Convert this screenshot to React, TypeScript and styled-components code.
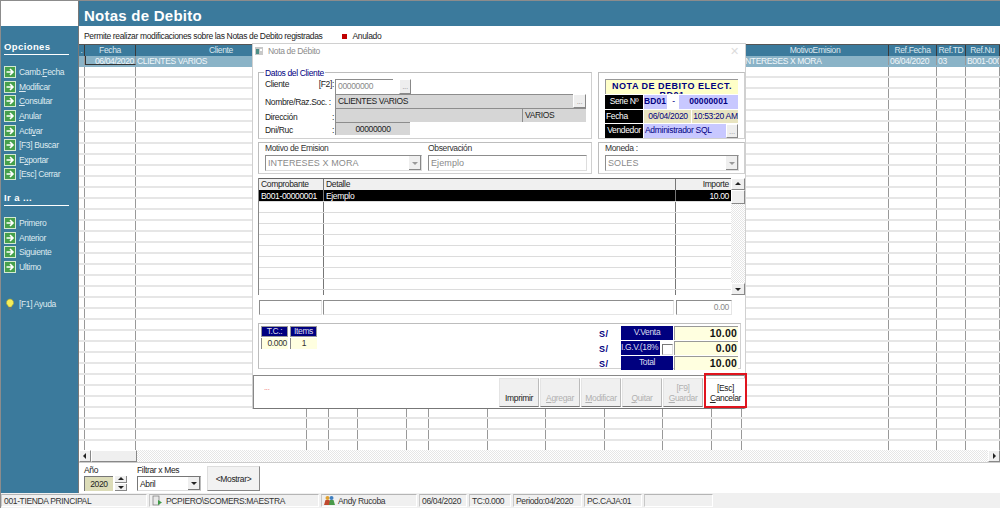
import React from "react";
import styled, { createGlobalStyle } from "styled-components";

const Global = createGlobalStyle`
  html, body { margin: 0; padding: 0; background: #fff; }
  body { font-family: "Liberation Sans", Arial, sans-serif; font-size: 8.5px; letter-spacing: -0.35px; color: #222; overflow: hidden; }
  * { box-sizing: border-box; }
`;

const TEAL = "#3b7a9c";
const NAVY = "#00007f";
const COLS = [6, 51, 171, 22, 29, 49, 22, 59, 58, 59, 58, 49, 30, 147, 48, 29, 34];
const TEMPLATE = COLS.map((c) => `${c}px`).join(" ");

const Page = styled.div`
  position: relative;
  width: 1000px;
  height: 508px;
  display: flex;
  flex-direction: column;
  border-top: 1px solid #8c8c8c;
  border-left: 1px solid #8c8c8c;
  overflow: hidden;
`;
const Main = styled.div`
  flex: 1;
  display: flex;
  min-height: 0;
`;
const Sidebar = styled.aside`
  width: 78px;
  flex: none;
  background: ${TEAL};
  display: flex;
  flex-direction: column;
  border-right: 1px solid #777;
`;
const Logo = styled.div`
  height: 25px;
  background: #fff;
  flex: none;
`;
const SideHead = styled.div<{ $mt?: number }>`
  margin: ${(p) => p.$mt ?? 15}px 9px 0 3px;
  padding-bottom: 2px;
  border-bottom: 1px solid #fff;
  color: #fff;
  font-weight: bold;
  font-size: 9.5px;
  letter-spacing: 0.4px;
  line-height: 11px;
  height: 14px;
`;
const SideList = styled.div<{ $mt?: number }>`
  margin-top: ${(p) => p.$mt ?? 10}px;
  display: flex;
  flex-direction: column;
`;
const SideItem = styled.div`
  height: 14.6px;
  display: flex;
  align-items: center;
  gap: 3px;
  padding-left: 3px;
  color: #dfeaf0;
  font-size: 8.5px;
  white-space: nowrap;
`;
const Content = styled.div`
  flex: 1;
  display: flex;
  flex-direction: column;
  min-width: 0;
`;
const Banner = styled.div`
  height: 25px;
  flex: none;
  background: ${TEAL};
  color: #fff;
  font-weight: bold;
  font-size: 15px;
  line-height: 29px;
  padding-left: 5px;
  letter-spacing: 0.25px;
`;
const Hint = styled.div`
  height: 18px;
  flex: none;
  display: flex;
  align-items: center;
  padding: 2px 0 0 5px;
  font-size: 8.5px;
  color: #222;
  white-space: nowrap;
`;
const RedDot = styled.span`
  width: 5px;
  height: 5px;
  background: #c00000;
  margin: 0 6px 0 19px;
`;
const Grid = styled.div`
  flex: 1;
  min-height: 0;
  overflow: hidden;
`;
const GridHead = styled.div`
  display: grid;
  grid-template-columns: ${TEMPLATE};
  height: 12px;
  background: ${TEAL};
  border-top: 1px solid #555;
  color: #dbe7ee;
  font-size: 8.5px;
  line-height: 11px;
`;
const HeadCell = styled.div`
  text-align: center;
  border-right: 1px solid #3a3a3a;
  overflow: hidden;
  white-space: nowrap;
`;
const GridRow = styled.div<{ $sel?: boolean }>`
  display: grid;
  grid-template-columns: ${TEMPLATE};
  height: 11px;
  background: ${(p) => (p.$sel ? "#8ab3c7" : "#fff")};
  border-bottom: 2px solid ${(p) => (p.$sel ? "#8ab3c7" : "#e6e6e6")};
  color: #f2f7fa;
  font-size: 8.5px;
  line-height: 10px;
`;
const Cell = styled.div<{ $right?: boolean; $focus?: boolean }>`
  border-right: 1px solid #999;
  overflow: hidden;
  white-space: nowrap;
  padding: 0 1px;
  text-align: ${(p) => (p.$right ? "right" : "left")};
  ${(p) => p.$focus && "border-bottom: 1px solid #333; border-left: 1px solid #333;"}
`;
const HScroll = styled.div`
  height: 13px;
  flex: none;
  display: flex;
  background: repeating-conic-gradient(#e6e6e6 0 25%, #fff 0 50%) 0 0 / 2px 2px;
  border-bottom: 1px solid #ccc;
`;
const ScrollBtn = styled.div<{ $w?: number; $h?: number }>`
  width: ${(p) => p.$w ?? 12}px;
  height: ${(p) => p.$h ?? 12}px;
  flex: none;
  display: flex;
  align-items: center;
  justify-content: center;
  background: #efefef;
  border-right: 1px solid #888;
  border-bottom: 1px solid #888;
  border-top: 1px solid #fff;
  border-left: 1px solid #fff;
`;
const HSpacer = styled.div`
  flex: 1;
`;
const Filter = styled.div`
  height: 30px;
  flex: none;
  display: flex;
  align-items: flex-end;
  padding: 0 0 2px 5px;
  background: #fff;
`;
const Stack = styled.div<{ $ml?: number }>`
  display: flex;
  flex-direction: column;
  margin-left: ${(p) => p.$ml ?? 0}px;
`;
const SmallLabel = styled.div`
  font-size: 8.5px;
  line-height: 11px;
  color: #222;
`;
const InsetRow = styled.div`
  display: flex;
  align-items: center;
  gap: 2px;
`;
const YearBox = styled.div`
  width: 29px;
  height: 15px;
  background: #dcdcb8;
  border-top: 1px solid #777;
  border-left: 1px solid #777;
  text-align: center;
  line-height: 14px;
  font-size: 8.5px;
`;
const Spin = styled.div`
  width: 12px;
  height: 15px;
  display: flex;
  flex-direction: column;
  gap: 1px;
`;
const SpinPart = styled.div`
  flex: 1;
  background: #f0f0f0;
  border-right: 1px solid #888;
  border-bottom: 1px solid #888;
  display: flex;
  align-items: center;
  justify-content: center;
`;
const MonthSelect = styled.div`
  width: 64px;
  height: 15px;
  border-top: 1px solid #777;
  border-left: 1px solid #777;
  border-right: 1px solid #bbb;
  border-bottom: 1px solid #ddd;
  display: flex;
  align-items: center;
  justify-content: space-between;
  padding-left: 2px;
  font-size: 8.5px;
`;
const MiniDrop = styled.div`
  width: 12px;
  height: 13px;
  background: #efefef;
  border-right: 1px solid #777;
  border-bottom: 1px solid #777;
  display: flex;
  align-items: center;
  justify-content: center;
`;
const ShowBtn = styled.div`
  width: 53px;
  height: 25px;
  margin-left: 6px;
  background: #f2f2f2;
  border-right: 1px solid #888;
  border-bottom: 1px solid #888;
  border-top: 1px solid #ddd;
  border-left: 1px solid #ddd;
  display: flex;
  align-items: center;
  justify-content: center;
  font-size: 8.5px;
`;
const Status = styled.footer`
  height: 15px;
  flex: none;
  display: flex;
  gap: 2px;
  background: #f0f0f0;
  padding-top: 1px;
`;
const Pane = styled.div<{ $w: number }>`
  width: ${(p) => p.$w}px;
  height: 13px;
  flex: none;
  display: flex;
  align-items: center;
  gap: 3px;
  padding-left: 2px;
  font-size: 8.5px;
  color: #333;
  white-space: nowrap;
  overflow: hidden;
  border-top: 1px solid #b5b5b5;
  border-left: 1px solid #c8c8c8;
  border-bottom: 1px solid #fff;
  border-right: 1px solid #fff;
`;

/* ---------- dialog ---------- */
const Dialog = styled.section`
  position: absolute;
  left: 251px;
  top: 42px;
  width: 494px;
  height: 366px;
  background: #fff;
  border: 1px solid #d0d0d0;
  border-bottom: none;
  display: flex;
  flex-direction: column;
`;
const TitleBar = styled.div`
  height: 17px;
  flex: none;
  display: flex;
  align-items: center;
  gap: 5px;
  padding: 0 5px 3px 2px;
  color: #8b8b8b;
  font-size: 8.5px;
`;
const TitleX = styled.span`
  margin-left: auto;
  color: #dcdcdc;
  font-size: 11px;
  margin-right: 1px;
`;
const Body = styled.div`
  flex: 1;
  padding: 11px 0 0 5px;
  display: flex;
  flex-direction: column;
`;
const TwoUp = styled.div<{ $mt?: number }>`
  display: flex;
  gap: 6px;
  margin-top: ${(p) => p.$mt ?? 0}px;
`;
const Group = styled.div<{ $w: number; $h: number }>`
  position: relative;
  width: ${(p) => p.$w}px;
  height: ${(p) => p.$h}px;
  flex: none;
  border: 1px solid #bdbdbd;
  border-right-color: #d0d0d0;
  border-bottom-color: #d0d0d0;
`;
const Legend = styled.span`
  position: absolute;
  left: 5px;
  top: -5px;
  background: #fff;
  padding: 0 1px;
  color: ${NAVY};
  font-size: 8.5px;
  line-height: 10px;
`;
const Datos = styled(Group)`
  padding: 6px 5px 0 6px;
  display: flex;
  flex-direction: column;
`;
const FormRow = styled.div<{ $h: number }>`
  height: ${(p) => p.$h}px;
  display: flex;
  align-items: center;
`;
const FormLabel = styled.div<{ $top?: number; $bottom?: number }>`
  width: 70px;
  flex: none;
  display: flex;
  justify-content: space-between;
  padding: ${(p) => p.$top ?? 0}px 1px ${(p) => p.$bottom ?? 0}px 0;
  font-size: 8.5px;
  white-space: nowrap;
  color: #222;
`;
const Field = styled.div<{ $w?: number; $bg?: string; $center?: boolean; $muted?: boolean }>`
  width: ${(p) => (p.$w ? `${p.$w}px` : "auto")};
  flex: ${(p) => (p.$w ? "none" : "1")};
  height: 100%;
  background: ${(p) => p.$bg ?? "#fff"};
  border-top: 1px solid #8d8d8d;
  border-left: 1px solid #8d8d8d;
  font-size: 8.5px;
  line-height: 12px;
  padding: 0 2px;
  text-align: ${(p) => (p.$center ? "center" : "left")};
  color: ${(p) => (p.$muted ? "#8a8a8a" : "#222")};
  white-space: nowrap;
  overflow: hidden;
`;
const Dots = styled.div<{ $w?: number; $ml?: number }>`
  width: ${(p) => p.$w ?? 13}px;
  margin-left: ${(p) => p.$ml ?? 0}px;
  height: 100%;
  flex: none;
  background: #eee;
  border-right: 1px solid #888;
  border-bottom: 1px solid #888;
  border-top: 1px solid #fff;
  border-left: 1px solid #fff;
  color: #999;
  font-size: 8px;
  line-height: 13px;
  text-align: center;
`;
const Split = styled(Group)`
  padding: 0 5px 0 6px;
  display: flex;
  gap: 6px;
`;
const Col = styled.div<{ $w: number }>`
  width: ${(p) => p.$w}px;
  flex: none;
  display: flex;
  flex-direction: column;
`;
const ColLabel = styled.div`
  height: 12px;
  line-height: 11px;
  font-size: 8.5px;
  color: #333;
`;
const Combo = styled.div`
  height: 16px;
  display: flex;
  justify-content: space-between;
  border-top: 1px solid #8d8d8d;
  border-left: 1px solid #8d8d8d;
  border-right: 1px solid #ddd;
  border-bottom: 1px solid #ddd;
  color: #8a8a8a;
  font-size: 9px;
  line-height: 14px;
  padding-left: 2px;
  letter-spacing: 0.1px;
`;
const ComboBtn = styled.div`
  width: 12px;
  background: #efefef;
  border-right: 1px solid #888;
  border-bottom: 1px solid #888;
  display: flex;
  align-items: center;
  justify-content: center;
`;
const Serie = styled(Group)`
  padding: 6px 6px 0 6px;
  display: flex;
  flex-direction: column;
  gap: 1px;
`;
const DocTitle = styled.div`
  height: 15px;
  background: #ffffc8;
  border-top: 1px solid #999;
  border-left: 1px solid #999;
  color: ${NAVY};
  font-weight: bold;
  font-size: 9px;
  line-height: 9px;
  padding-top: 2px;
  letter-spacing: 0.5px;
  text-align: center;
  overflow: hidden;
`;
const SerieRow = styled.div<{ $h: number }>`
  height: ${(p) => p.$h}px;
  display: flex;
  gap: 1px;
`;
const BlackTag = styled.div<{ $left?: boolean }>`
  width: 38px;
  flex: none;
  background: #000;
  color: #fff;
  font-size: 8.5px;
  line-height: 13px;
  text-align: ${(p) => (p.$left ? "left" : "center")};
  padding-left: ${(p) => (p.$left ? 1 : 0)}px;
  overflow: hidden;
  white-space: nowrap;
`;
const Value = styled.div<{ $w?: number; $bg: string; $bold?: boolean; $center?: boolean }>`
  width: ${(p) => (p.$w ? `${p.$w}px` : "auto")};
  flex: ${(p) => (p.$w ? "none" : "1")};
  display: flex;
  justify-content: ${(p) => (p.$center ? "center" : "space-between")};
  background: ${(p) => p.$bg};
  color: ${NAVY};
  font-size: 8.5px;
  font-weight: ${(p) => (p.$bold ? "bold" : "normal")};
  letter-spacing: ${(p) => (p.$bold ? "0.1px" : "-0.3px")};
  line-height: 13px;
  padding-left: ${(p) => (p.$bold ? 0 : 1)}px;
  white-space: nowrap;
  overflow: hidden;
`;
const Detail = styled.div`
  margin-top: 4px;
  width: 487px;
  height: 117px;
  display: flex;
`;
const DetailTable = styled.div`
  flex: 1;
  display: flex;
  flex-direction: column;
  border-left: 1px solid #888;
  overflow: hidden;
`;
const DetailHead = styled.div`
  height: 12px;
  flex: none;
  display: grid;
  grid-template-columns: 65px 352px 56px;
  background: #f0f0f0;
  border-top: 1px solid #666;
  font-size: 8.5px;
  line-height: 11px;
`;
const DetailRow = styled.div<{ $sel?: boolean; $h?: number }>`
  height: ${(p) => p.$h ?? 11}px;
  flex: none;
  display: grid;
  grid-template-columns: 65px 352px 56px;
  background: ${(p) => (p.$sel ? "#000" : "#fff")};
  color: ${(p) => (p.$sel ? "#fff" : "#222")};
  border-bottom: 1px solid #dcdcdc;
  font-size: 8.5px;
  line-height: 12px;
`;
const DCell = styled.div<{ $right?: boolean }>`
  padding: 0 2px;
  border-right: 1px solid #777;
  text-align: ${(p) => (p.$right ? "right" : "left")};
  white-space: nowrap;
  overflow: hidden;
`;
const VScroll = styled.div`
  width: 14px;
  flex: none;
  display: flex;
  flex-direction: column;
  background: repeating-conic-gradient(#e6e6e6 0 25%, #fff 0 50%) 0 0 / 2px 2px;
`;
const SumRow = styled.div`
  margin-top: 5px;
  height: 15px;
  display: flex;
  gap: 1px;
  padding-left: 1px;
`;
const SumBox = styled.div<{ $w: number; $ml?: number }>`
  width: ${(p) => p.$w}px;
  margin-left: ${(p) => p.$ml ?? 0}px;
  border-top: 1px solid #8d8d8d;
  border-left: 1px solid #8d8d8d;
  border-bottom: 1px solid #e5e5e5;
  border-right: 1px solid #e5e5e5;
  color: #8a8a8a;
  text-align: right;
  font-size: 8.5px;
  line-height: 13px;
  padding-right: 2px;
`;
const Totals = styled(Group)`
  margin-top: 8px;
  padding: 2px 2px 0 2px;
  display: flex;
  justify-content: space-between;
`;
const MiniGrid = styled.div`
  display: grid;
  grid-template-columns: 27px 27px;
  grid-auto-rows: 11px;
  gap: 1px 2px;
`;
const NavyTag = styled.div`
  background: ${NAVY};
  border: 1px solid #999;
  color: #dde;
  font-size: 8.5px;
  line-height: 9px;
  text-align: center;
  white-space: nowrap;
  overflow: hidden;
`;
const CreamCell = styled.div<{ $right?: boolean }>`
  background: #ffffe0;
  border-left: 1px solid #888;
  font-size: 8.5px;
  line-height: 11px;
  text-align: ${(p) => (p.$right ? "right" : "center")};
  padding: 0 1px;
  color: #333;
`;
const Money = styled.div`
  display: grid;
  grid-template-columns: 21px 52px 64px;
  grid-auto-rows: 14px;
  gap: 1px;
  align-items: stretch;
`;
const Currency = styled.div`
  color: ${NAVY};
  font-weight: bold;
  font-size: 9px;
  line-height: 16px;
  letter-spacing: 0.5px;
`;
const AmountTag = styled.div`
  position: relative;
  background: ${NAVY};
  color: #dde;
  font-size: 8.5px;
  line-height: 12px;
  text-align: center;
  white-space: nowrap;
  overflow: hidden;
`;
const ChopTag = styled(AmountTag)`
  text-align: left;
`;
const Check = styled.span`
  position: absolute;
  right: 0;
  top: 0;
  width: 13px;
  height: 14px;
  background: #fff;
  border: 2px solid #fff;
  border-top: 3px solid #fff;
  &::before {
    content: "";
    display: block;
    width: 9px;
    height: 9px;
    border-top: 1px solid #777;
    border-left: 1px solid #777;
    border-right: 1px solid #ddd;
    border-bottom: 1px solid #ddd;
  }
`;
const Amount = styled.div`
  background: #ffffe0;
  border-top: 1px solid #999;
  border-left: 1px solid #999;
  color: #111;
  font-weight: bold;
  font-size: 10.5px;
  line-height: 13px;
  text-align: right;
  padding-right: 1px;
  letter-spacing: 0.2px;
`;
const ActionBar = styled.div`
  height: 34px;
  flex: none;
  border-top: 1px solid #888;
  border-left: 1px solid #888;
  border-bottom: 1px solid #777;
  border-right: 1px solid #bbb;
  display: flex;
  align-items: flex-start;
  padding: 2px 0 0 10px;
  background: #fff;
`;
const Note = styled.span`
  color: #e66;
  font-size: 8px;
  line-height: 20px;
  margin-right: auto;
`;
const ActionBtn = styled.div<{ $off?: boolean; $w?: number; $danger?: boolean }>`
  position: relative;
  width: ${(p) => p.$w ?? 40}px;
  height: 29px;
  margin-right: ${(p) => (p.$danger ? -2 : 1)}px;
  margin-left: ${(p) => (p.$danger ? 1 : 0)}px;
  background: ${(p) => (p.$danger ? "#fff" : "#f0f0f0")};
  border-right: 1px solid #bbb;
  border-bottom: 1px solid #777;
  border-left: 1px solid #e4e4e4;
  border-top: 1px solid #e4e4e4;
  color: ${(p) => (p.$off ? "#b0b0b0" : "#222")};
  font-size: 8.5px;
  line-height: 10px;
  display: flex;
  flex-direction: column;
  align-items: center;
  justify-content: flex-end;
  padding-bottom: 3px;
`;
const RedFrame = styled.span`
  position: absolute;
  inset: -6px -2px -2px -2px;
  border: 2px solid #e0141e;
  pointer-events: none;
`;

const Arrow = () => (
  <svg width="12" height="12" viewBox="0 0 12 12" style={{ flex: "none" }}>
    <rect x="0.5" y="0.5" width="11" height="11" fill="#46a04c" stroke="#d4ead2" />
    <path d="M2.5 6h6M6 3l3 3-3 3" stroke="#fff" strokeWidth="1.6" fill="none" />
  </svg>
);
const Bulb = () => (
  <svg width="12" height="13" viewBox="0 0 12 13" style={{ flex: "none" }}>
    <path d="M6 1a3.6 3.6 0 0 0-2.2 6.4c.5.5.7 1 .7 1.6h3c0-.6.2-1.1.7-1.6A3.6 3.6 0 0 0 6 1z" fill="#f4ee5a" stroke="#b9a92e" strokeWidth=".6" />
    <rect x="4.6" y="9.2" width="2.8" height="2.6" fill="#6c7478" />
  </svg>
);
const Tri = ({ dir = "down", c = "#222" }: { dir?: "up" | "down" | "left" | "right"; c?: string }) => {
  const d = { up: "M0 4L3 1l3 3z", down: "M0 2h6L3 5z", left: "M4 0v6L1 3z", right: "M2 0v6l3-3z" }[dir];
  return (
    <svg width="6" height="6" viewBox="0 0 6 6">
      <path d={d} fill={c} />
    </svg>
  );
};
const WinIcon = () => (
  <svg width="8" height="8" viewBox="0 0 8 8" style={{ flex: "none" }}>
    <rect x="0" y="0" width="8" height="8" fill="#c9c9c9" />
    <rect x="1" y="2" width="3" height="5" fill="#4f8f86" />
    <rect x="5" y="2" width="2" height="2" fill="#fff" />
  </svg>
);
const DbIcon = () => (
  <svg width="11" height="11" viewBox="0 0 11 11" style={{ flex: "none" }}>
    <rect x="1" y="1" width="6" height="9" fill="#e8e8e8" stroke="#777" strokeWidth=".7" />
    <path d="M6 5l4 2.5L6 10z" fill="#3d9a45" />
  </svg>
);
const UsersIcon = () => (
  <svg width="11" height="11" viewBox="0 0 11 11" style={{ flex: "none" }}>
    <circle cx="3.5" cy="3" r="2" fill="#e0a030" />
    <circle cx="7.5" cy="3" r="2" fill="#3f7fc0" />
    <path d="M0 10l1.5-5h4L7 10z" fill="#c0492f" />
    <path d="M5 10l1-5h3.5l1.5 5z" fill="#4a9a4a" />
  </svg>
);

const opciones: React.ReactNode[] = [
  <span>Camb.<u>F</u>echa</span>,
  <span><u>M</u>odificar</span>,
  <span><u>C</u>onsultar</span>,
  <span><u>A</u>nular</span>,
  <span>Acti<u>v</u>ar</span>,
  <span>[F3] Buscar</span>,
  <span>E<u>x</u>portar</span>,
  <span>[Esc] Cerrar</span>,
];
const irA = ["Primero", "Anterior", "Siguiente", "Ultimo"];
const heads: Record<number, string> = { 0: ".", 1: "Fecha", 2: "Cliente", 13: "MotivoEmision", 14: "Ref.Fecha", 15: "Ref.TD", 16: "Ref.Nu" };
const selected: Record<number, string> = { 2: "CLIENTES VARIOS", 13: "INTERESES X MORA", 14: "06/04/2020", 15: "03", 16: "B001-00000001" };

export default function App() {
  return (
    <Page>
      <Global />
      <Main>
        <Sidebar>
          <Logo />
          <SideHead>Opciones</SideHead>
          <SideList>
            {opciones.map((o, i) => (
              <SideItem key={i}><Arrow />{o}</SideItem>
            ))}
          </SideList>
          <SideHead $mt={10}>Ir a ...</SideHead>
          <SideList>
            {irA.map((o) => (
              <SideItem key={o}><Arrow />{o}</SideItem>
            ))}
          </SideList>
          <SideList $mt={23}>
            <SideItem><Bulb />[F1] Ayuda</SideItem>
          </SideList>
        </Sidebar>
        <Content>
          <Banner>Notas de Debito</Banner>
          <Hint>
            Permite realizar modificaciones sobre las Notas de Debito registradas
            <RedDot />
            Anulado
          </Hint>
          <Grid>
            <GridHead>
              {COLS.map((_, i) => (
                <HeadCell key={i}>{heads[i] ?? ""}</HeadCell>
              ))}
            </GridHead>
            <GridRow $sel>
              {COLS.map((_, i) =>
                i === 1 ? (
                  <Cell key={i} $right $focus>06/04/2020</Cell>
                ) : (
                  <Cell key={i}>{selected[i] ?? ""}</Cell>
                )
              )}
            </GridRow>
            {Array.from({ length: 35 }).map((_, r) => (
              <GridRow key={r}>
                {COLS.map((_, i) => (
                  <Cell key={i} />
                ))}
              </GridRow>
            ))}
          </Grid>
          <HScroll>
            <ScrollBtn><Tri dir="left" /></ScrollBtn>
            <ScrollBtn $w={46} />
            <HSpacer />
            <ScrollBtn><Tri dir="right" /></ScrollBtn>
          </HScroll>
          <Filter>
            <Stack>
              <SmallLabel>Año</SmallLabel>
              <InsetRow>
                <YearBox>2020</YearBox>
                <Spin>
                  <SpinPart><Tri dir="up" /></SpinPart>
                  <SpinPart><Tri dir="down" /></SpinPart>
                </Spin>
              </InsetRow>
            </Stack>
            <Stack $ml={10}>
              <SmallLabel>Filtrar x Mes</SmallLabel>
              <MonthSelect>
                Abril
                <MiniDrop><Tri /></MiniDrop>
              </MonthSelect>
            </Stack>
            <ShowBtn>&lt;Mostrar&gt;</ShowBtn>
          </Filter>
        </Content>
      </Main>
      <Status>
        <Pane $w={146}>001-TIENDA PRINCIPAL</Pane>
        <Pane $w={170}><DbIcon />PCPIERO\SCOMERS:MAESTRA</Pane>
        <Pane $w={96}><UsersIcon />Andy Rucoba</Pane>
        <Pane $w={48}>06/04/2020</Pane>
        <Pane $w={42}>TC:0.000</Pane>
        <Pane $w={69}>Periodo:04/2020</Pane>
        <Pane $w={58}>PC.CAJA:01</Pane>
        <Pane $w={69} />
      </Status>

      <Dialog>
        <TitleBar>
          <WinIcon />
          Nota de Débito
          <TitleX>✕</TitleX>
        </TitleBar>
        <Body>
          <TwoUp>
            <Datos $w={334} $h={67}>
              <Legend>Datos del Cliente</Legend>
              <FormRow $h={15}>
                <FormLabel $bottom={5}><span>Cliente</span><span>[F2]:</span></FormLabel>
                <Field $w={58} $muted>00000000</Field>
                <Dots $w={12} $ml={6}>...</Dots>
              </FormRow>
              <FormRow $h={14}>
                <FormLabel $top={1}><span>Nombre/Raz.Soc. :</span></FormLabel>
                <Field $bg="#d6d6d6">CLIENTES VARIOS</Field>
                <Dots>...</Dots>
              </FormRow>
              <FormRow $h={14}>
                <FormLabel $top={3}><span>Dirección</span><span>:</span></FormLabel>
                <Field $bg="#d6d6d6" />
                <Field $w={64} $bg="#d6d6d6">VARIOS</Field>
              </FormRow>
              <FormRow $h={13}>
                <FormLabel $top={3}><span>Dni/Ruc</span><span>:</span></FormLabel>
                <Field $w={75} $bg="#d6d6d6" $center>00000000</Field>
              </FormRow>
            </Datos>
            <Serie $w={147} $h={67}>
              <DocTitle>NOTA DE DEBITO ELECT.<br />BD01</DocTitle>
              <SerieRow $h={14}>
                <BlackTag>Serie Nº</BlackTag>
                <Value $w={23} $bg="#c8c8ff" $bold>BD01</Value>
                <Value $w={10} $bg="#fff" $center>-</Value>
                <Value $bg="#c8c8ff" $bold $center>00000001</Value>
              </SerieRow>
              <SerieRow $h={13}>
                <BlackTag $left>Fecha</BlackTag>
                <Value $w={47} $bg="#e8e4c0" $center>06/04/2020</Value>
                <Value $bg="#e8e4c0" $center>10:53:20 AM</Value>
              </SerieRow>
              <SerieRow $h={14}>
                <BlackTag>Vendedor</BlackTag>
                <Value $bg="#c8c8ff">
                  Administrador SQL
                  <Dots $w={12}>...</Dots>
                </Value>
              </SerieRow>
            </Serie>
          </TwoUp>
          <TwoUp $mt={3}>
            <Split $w={334} $h={32}>
              <Col $w={157}>
                <ColLabel>Motivo de Emision</ColLabel>
                <Combo>
                  INTERESES X MORA
                  <ComboBtn><Tri c="#999" /></ComboBtn>
                </Combo>
              </Col>
              <Col $w={159}>
                <ColLabel>Observación</ColLabel>
                <Combo>Ejemplo</Combo>
              </Col>
            </Split>
            <Split $w={147} $h={32}>
              <Col $w={134}>
                <ColLabel>Moneda :</ColLabel>
                <Combo>
                  SOLES
                  <ComboBtn><Tri c="#999" /></ComboBtn>
                </Combo>
              </Col>
            </Split>
          </TwoUp>
          <Detail>
            <DetailTable>
              <DetailHead>
                <DCell>Comprobante</DCell>
                <DCell>Detalle</DCell>
                <DCell $right>Importe</DCell>
              </DetailHead>
              <DetailRow $sel $h={12}>
                <DCell>B001-00000001</DCell>
                <DCell>Ejemplo</DCell>
                <DCell $right>10.00</DCell>
              </DetailRow>
              {Array.from({ length: 9 }).map((_, i) => (
                <DetailRow key={i}>
                  <DCell /><DCell /><DCell />
                </DetailRow>
              ))}
            </DetailTable>
            <VScroll>
              <ScrollBtn $w={14} $h={12}><Tri dir="up" /></ScrollBtn>
              <ScrollBtn $w={14} $h={14} />
              <HSpacer />
              <ScrollBtn $w={14} $h={12}><Tri /></ScrollBtn>
            </VScroll>
          </Detail>
          <SumRow>
            <SumBox $w={63} />
            <SumBox $w={351} />
            <SumBox $w={56} $ml={1}>0.00</SumBox>
          </SumRow>
          <Totals $w={483} $h={46}>
            <MiniGrid>
              <NavyTag>T.C.:</NavyTag>
              <NavyTag>Items</NavyTag>
              <CreamCell $right>0.000</CreamCell>
              <CreamCell>1</CreamCell>
            </MiniGrid>
            <Money>
              <Currency>S/</Currency>
              <AmountTag>V.Venta</AmountTag>
              <Amount>10.00</Amount>
              <Currency>S/</Currency>
              <ChopTag>I.G.V.(18%<Check /></ChopTag>
              <Amount>0.00</Amount>
              <Currency>S/</Currency>
              <AmountTag>Total</AmountTag>
              <Amount>10.00</Amount>
            </Money>
          </Totals>
        </Body>
        <ActionBar>
          <Note>...</Note>
          <ActionBtn>Imprimir</ActionBtn>
          <ActionBtn $off><span><u>A</u>gregar</span></ActionBtn>
          <ActionBtn $off><span><u>M</u>odificar</span></ActionBtn>
          <ActionBtn $off><span><u>Q</u>uitar</span></ActionBtn>
          <ActionBtn $off><span>[F9]</span><span><u>G</u>uardar</span></ActionBtn>
          <ActionBtn $danger $w={41}>
            <span>[Esc]</span>
            <span><u>C</u>ancelar</span>
            <RedFrame />
          </ActionBtn>
        </ActionBar>
      </Dialog>
    </Page>
  );
}
